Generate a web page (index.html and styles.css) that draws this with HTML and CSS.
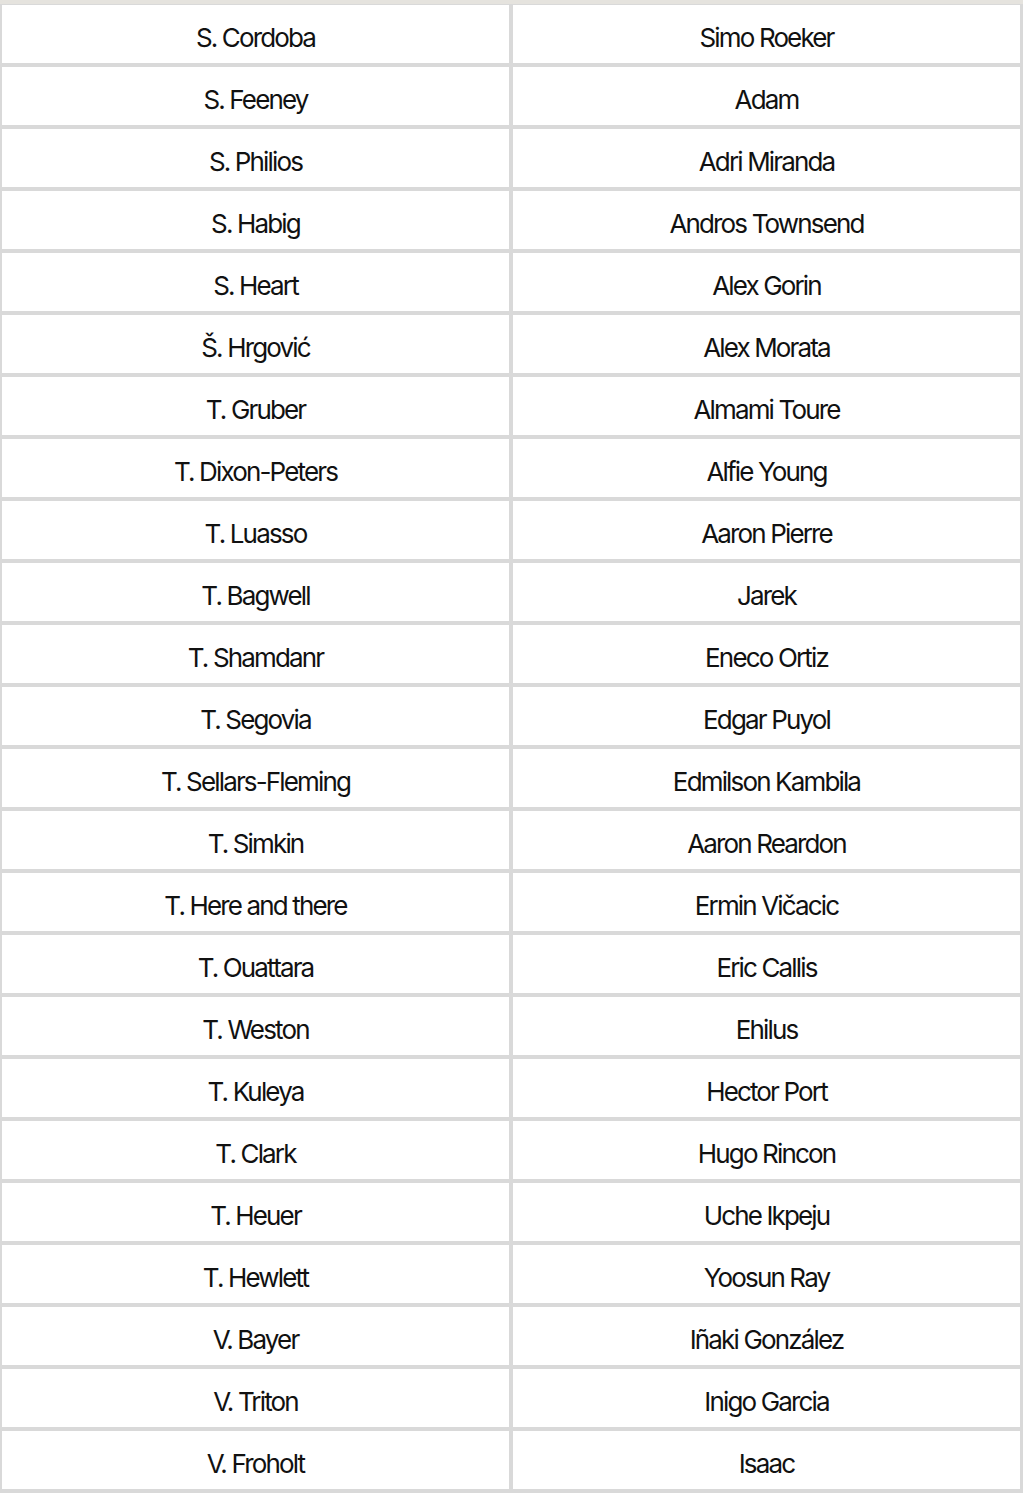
FILE: index.html
```html
<!DOCTYPE html>
<html>
<head>
<meta charset="utf-8">
<link rel="stylesheet" href="styles.css">
</head>
<body>
<div class="table">
  <div class="cell">S. Cordoba</div><div class="cell">Simo Roeker</div>
  <div class="cell">S. Feeney</div><div class="cell">Adam</div>
  <div class="cell">S. Philios</div><div class="cell">Adri Miranda</div>
  <div class="cell">S. Habig</div><div class="cell">Andros Townsend</div>
  <div class="cell">S. Heart</div><div class="cell">Alex Gorin</div>
  <div class="cell">Š. Hrgović</div><div class="cell">Alex Morata</div>
  <div class="cell">T. Gruber</div><div class="cell">Almami Toure</div>
  <div class="cell">T. Dixon-Peters</div><div class="cell">Alfie Young</div>
  <div class="cell">T. Luasso</div><div class="cell">Aaron Pierre</div>
  <div class="cell">T. Bagwell</div><div class="cell">Jarek</div>
  <div class="cell">T. Shamdanr</div><div class="cell">Eneco Ortiz</div>
  <div class="cell">T. Segovia</div><div class="cell">Edgar Puyol</div>
  <div class="cell">T. Sellars-Fleming</div><div class="cell">Edmilson Kambila</div>
  <div class="cell">T. Simkin</div><div class="cell">Aaron Reardon</div>
  <div class="cell">T. Here and there</div><div class="cell">Ermin Vičacic</div>
  <div class="cell">T. Ouattara</div><div class="cell">Eric Callis</div>
  <div class="cell">T. Weston</div><div class="cell">Ehilus</div>
  <div class="cell">T. Kuleya</div><div class="cell">Hector Port</div>
  <div class="cell">T. Clark</div><div class="cell">Hugo Rincon</div>
  <div class="cell">T. Heuer</div><div class="cell">Uche Ikpeju</div>
  <div class="cell">T. Hewlett</div><div class="cell">Yoosun Ray</div>
  <div class="cell">V. Bayer</div><div class="cell">Iñaki González</div>
  <div class="cell">V. Triton</div><div class="cell">Inigo Garcia</div>
  <div class="cell">V. Froholt</div><div class="cell">Isaac</div>
</div>
</body>
</html>
```
FILE: styles.css
```css
html, body {
  margin: 0;
  padding: 0;
  background: #ffffff;
}
.table {
  display: grid;
  grid-template-columns: 507px 507px;
  column-gap: 4px;
  row-gap: 4px;
  background: #d9d9d9;
  border-top: 4px solid #e5e3de;
  padding: 1px 3px 4px 2px;
  width: 1018px;
}
.cell {
  background: #ffffff;
  height: 58px;
  display: flex;
  align-items: center;
  justify-content: center;
  padding-top: 6px;
  box-sizing: border-box;
  font-family: Inter, "Noto Sans", sans-serif;
  font-size: 26px;
  letter-spacing: -1.85px;
  color: #111111;
}
```
